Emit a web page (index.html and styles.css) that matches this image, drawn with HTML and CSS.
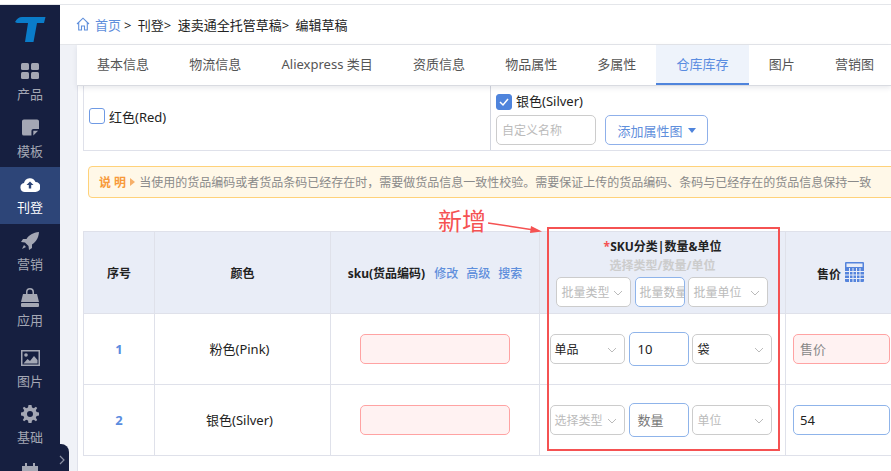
FILE: index.html
```html
<!DOCTYPE html>
<html lang="zh">
<head>
<meta charset="utf-8">
<title>编辑草稿</title>
<link rel="stylesheet" href="styles.css">
</head>
<body>
<div class="topline"></div>
<div class="app">
  <aside class="sidebar">
    <div class="logo">
      <svg width="31" height="26" viewBox="0 0 31 26"><path d="M0 5C2 1.500 4 0 7 0H30.500L29 6H22L18.500 25H10L13 6H2Z" fill="#0a7cc9"/></svg>
    </div>
    <div class="nav-item">
      <svg class="nav-icon" width="18" height="16" viewBox="0 0 18 16"><rect x="0" y="0" width="8" height="7" rx="1.500"/><rect x="10" y="0" width="8" height="7" rx="1.500"/><rect x="0" y="9" width="8" height="7" rx="1.500"/><rect x="10" y="9" width="8" height="7" rx="1.500"/></svg>
      <span>产品</span>
    </div>
    <div class="nav-item">
      <svg class="nav-icon" width="17" height="17" viewBox="0 0 18 17"><path d="M2 0H16A2 2 0 0 1 18 2V10H12A2 2 0 0 0 10 12V17H2A2 2 0 0 1 0 15V2A2 2 0 0 1 2 0Z"/><path d="M12 12H17L12 17Z"/></svg>
      <span>模板</span>
    </div>
    <div class="nav-item active">
      <svg class="nav-icon" width="20" height="15" viewBox="0 0 20 15"><path d="M5 15A4.500 4.500 0 0 1 4 6.100A6 6 0 0 1 15.500 5A5 5 0 0 1 15.500 15Z"/><path d="M10 4.500L13.500 8H11.200V11.500H8.800V8H6.500Z" fill="#2d4578"/></svg>
      <span>刊登</span>
    </div>
    <div class="nav-item">
      <svg class="nav-icon" width="18" height="18" viewBox="0 0 18 18"><path d="M18 0C12 .5 8 3 5.500 7H2L0 10L4 10.500L7.500 14L8 18L11 16V12.500C15 10 17.500 6 18 0Z"/><path d="M3 13L5 15L1 17Z"/></svg>
      <span>营销</span>
    </div>
    <div class="nav-item">
      <svg class="nav-icon" width="18" height="19" viewBox="0 0 18 19"><path d="M2 6H5V4A4 4 0 0 1 13 4V6H16L18 14H0ZM6.500 6H11.500V4A2.500 2.500 0 0 0 6.500 4Z" fill-rule="evenodd"/><rect x="0" y="15" width="18" height="4" rx="1"/></svg>
      <span>应用</span>
    </div>
    <div class="nav-item low">
      <svg class="nav-icon" width="19" height="16" viewBox="0 0 19 16"><path d="M0 0H19V16H0ZM1.500 1.500V14.500H17.500V1.500Z" fill-rule="evenodd"/><circle cx="5" cy="5" r="1.800"/><path d="M2.500 13.500L6.500 9L9 11L13 6L16.500 10V13.500Z"/></svg>
      <span>图片</span>
    </div>
    <div class="nav-item low">
      <svg class="nav-icon" width="18" height="18" viewBox="0 0 18 18"><path fill-rule="evenodd" d="M7.500 0H10.500L11 2.400L12.800 3.200L14.900 1.800L16.200 3.100L14.800 5.200L15.600 7L18 7.500V10.500L15.600 11L14.800 12.800L16.200 14.900L14.900 16.200L12.800 14.800L11 15.600L10.500 18H7.500L7 15.600L5.200 14.800L3.100 16.200L1.800 14.900L3.200 12.800L2.400 11L0 10.500V7.500L2.400 7L3.200 5.200L1.800 3.100L3.100 1.800L5.200 3.200L7 2.400ZM9 6A3 3 0 1 0 9 12A3 3 0 1 0 9 6Z"/></svg>
      <span>基础</span>
    </div>
    <div class="nav-item low">
      <svg class="nav-icon" width="18" height="16" viewBox="0 0 18 16"><path d="M1 3H4V0H6V3H12V0H14V3H17V16H1Z"/></svg>
    </div>
  </aside>
  <main class="main">
    <header class="crumbs">
      <svg class="home" width="14" height="14" viewBox="0 0 14 14"><path d="M1 7L7 1.200L13 7M2.700 5.800V13H5.500V9H8.500V13H11.300V5.800" fill="none" stroke="#5f8fdc" stroke-width="1.100"/></svg>
      <a class="crumb-home">首页</a>
      <span class="crumb-rest">&gt; 刊登&gt; 速卖通全托管草稿&gt; 编辑草稿</span>
    </header>
    <div class="stage">
      <div class="gutter"></div>
      <section class="content">
        <nav class="tabs">
          <a class="tab">基本信息</a>
          <a class="tab">物流信息</a>
          <a class="tab">Aliexpress 类目</a>
          <a class="tab">资质信息</a>
          <a class="tab">物品属性</a>
          <a class="tab">多属性</a>
          <a class="tab current">仓库库存</a>
          <a class="tab">图片</a>
          <a class="tab">营销图</a>
        </nav>
        <div class="pane">
          <div class="attrs">
            <div class="attr attr-left">
              <span class="check"></span><span class="attr-name">红色(Red)</span>
            </div>
            <div class="attr attr-right">
              <div class="attr-head">
                <span class="check on"><svg width="12" height="10" viewBox="0 0 12 10"><path d="M2 5L5 8L10 2" fill="none" stroke="#fff" stroke-width="1.500"/></svg></span>
                <span class="attr-name up">银色(Silver)</span>
              </div>
              <div class="attr-tools">
                <div class="field ph name-field">自定义名称</div>
                <div class="add-btn">添加属性图<i class="caret"></i></div>
              </div>
            </div>
          </div>
          <div class="notice"><b>说 明</b><i class="tri"></i><span>当使用的货品编码或者货品条码已经存在时，需要做货品信息一致性校验。需要保证上传的货品编码、条码与已经存在的货品信息保持一致</span></div>
          <table class="grid">
            <colgroup><col class="c1"><col class="c2"><col class="c3"><col class="c4"><col class="c5"></colgroup>
            <thead>
              <tr>
                <th>序号</th>
                <th>颜色</th>
                <th><span class="sku-title">sku(货品编码)</span><a class="lnk">修改</a><a class="lnk">高级</a><a class="lnk">搜索</a></th>
                <th class="sku-cell">
                  <div class="sku-h"><em>*</em>SKU分类|数量&amp;单位</div>
                  <div class="sku-sub">选择类型/数量/单位</div>
                  <div class="trio trio-head">
                    <div class="field sel ph w75 pad5">批量类型<svg class="chev" width="10" height="6" viewBox="0 0 10 6"><path d="M1 1L5 5L9 1"/></svg></div>
                    <div class="field ph focus w50">批量数量</div>
                    <div class="field sel ph w80 pad5">批量单位<svg class="chev" width="10" height="6" viewBox="0 0 10 6"><path d="M1 1L5 5L9 1"/></svg></div>
                  </div>
                </th>
                <th><span class="price">售价</span><svg class="calc" width="19" height="20" viewBox="0 0 19 20"><path fill-rule="evenodd" fill="#5584dc" d="M1 0H18A1 1 0 0 1 19 1V19A1 1 0 0 1 18 20H1A1 1 0 0 1 0 19V1A1 1 0 0 1 1 0ZM1.500 1.500V5H17.500V1.500Z"/><path stroke="#e9edf7" stroke-width="1" d="M0 9.500H19M0 13H19M0 16.500H19M4.500 6V20M8 6V20M11.500 6V20M15 6V20"/></svg></th>
              </tr>
            </thead>
            <tbody>
              <tr>
                <td class="idx">1</td>
                <td class="color">粉色(Pink)</td>
                <td><div class="field err sku-input"></div></td>
                <td>
                  <div class="trio">
                    <div class="field sel w75">单品<svg class="chev" width="10" height="6" viewBox="0 0 10 6"><path d="M1 1L5 5L9 1"/></svg></div>
                    <div class="field focus qty">10</div>
                    <div class="field sel w80 pad5">袋<svg class="chev" width="10" height="6" viewBox="0 0 10 6"><path d="M1 1L5 5L9 1"/></svg></div>
                  </div>
                </td>
                <td class="price-td"><div class="field err price-input">售价</div></td>
              </tr>
              <tr>
                <td class="idx">2</td>
                <td class="color">银色(Silver)</td>
                <td><div class="field err sku-input"></div></td>
                <td>
                  <div class="trio">
                    <div class="field sel ph w75">选择类型<svg class="chev" width="10" height="6" viewBox="0 0 10 6"><path d="M1 1L5 5L9 1"/></svg></div>
                    <div class="field focus qty muted">数量</div>
                    <div class="field sel ph w80 pad5">单位<svg class="chev" width="10" height="6" viewBox="0 0 10 6"><path d="M1 1L5 5L9 1"/></svg></div>
                  </div>
                </td>
                <td class="price-td"><div class="field focus price-input val">54</div></td>
              </tr>
            </tbody>
          </table>
        </div>
      </section>
    </div>
  </main>
</div>
<div class="collapse">
  <svg width="6" height="10" viewBox="0 0 6 10"><path d="M1 1L5 5L1 9" fill="none" stroke="#8b90a3" stroke-width="1.200"/></svg>
</div>
<div class="note-label">新增</div>
<svg class="note-arrow" width="56" height="14" viewBox="0 0 56 14"><path d="M0 2L46 9" stroke="#f55252" stroke-width="1.500"/><path d="M43 5L54 10.500L42 12Z" fill="#f55252"/></svg>
<div class="note-box"></div>
</body>
</html>
```

FILE: styles.css
```css
* { box-sizing: border-box; }
html, body { margin: 0; padding: 0; height: 100%; overflow: hidden; background: #fff; }
body {
  position: relative;
  font-family: "Noto Sans", "Noto Sans CJK SC", sans-serif;
  font-size: 13px;
  color: #222;
}
.topline { height: 5px; background: #fff; border-bottom: 1px solid #e4e6ea; }
.app { display: flex; height: 466px; overflow: hidden; }

/* sidebar */
.sidebar {
  width: 60px;
  flex: none;
  background: #161f40;
  display: flex;
  flex-direction: column;
  align-items: stretch;
  overflow: hidden;
}
.logo { height: 49px; flex: none; display: flex; align-items: flex-start; justify-content: center; padding: 12px 0 0 1px; }
.nav-item {
  height: 56.5px;
  flex: none;
  display: grid;
  grid-template-rows: 16px 18px;
  justify-items: center;
  align-items: center;
  align-content: start;
  padding-top: 9px;
  row-gap: 6px;
  color: #a4a7b4;
  font-size: 13px;
  line-height: 18px;
}
.nav-item.low { padding-top: 13px; }
.nav-icon { fill: #a4a7b4; display: block; }
.nav-item.active { background: #2d4578; color: #fff; }
.nav-item.active .nav-icon { fill: #fff; }
.collapse {
  position: absolute;
  left: 50px;
  bottom: 0;
  width: 19px;
  height: 27px;
  background: #161f40;
  border-radius: 0 8px 0 0;
  display: flex;
  align-items: flex-end;
  justify-content: flex-end;
  padding: 0 4px 6px 0;
}

/* header */
.main { flex: 1; min-width: 0; display: flex; flex-direction: column; }
.crumbs {
  height: 40px;
  flex: none;
  display: flex;
  align-items: center;
  padding: 0 0 1px 16px;
  background: #fff;
  border-bottom: 1px solid #e4e6ea;
  font-size: 13px;
  color: #222;
  white-space: nowrap;
}
.home { margin-right: 5px; flex: none; }
.crumb-home { color: #5f8fdc; }
.crumb-rest { margin-left: 3px; word-spacing: 3px; }
.stage { flex: 1; display: flex; min-height: 0; }
.gutter { width: 17px; flex: none; background: #f0f2f7; }
.content { flex: 1; min-width: 0; display: flex; flex-direction: column; position: relative; background: #fff; }

/* tabs */
.tabs {
  height: 41px;
  flex: none;
  display: flex;
  background: #fff;
  border-bottom: 1px solid #d9dbe1;
  box-shadow: 0 2px 5px rgba(40, 50, 80, .10);
  position: relative;
  z-index: 1;
  white-space: nowrap;
}
.tab { padding: 0 20.100px; line-height: 39px; color: #555; font-size: 13px; flex: none; }
.current { color: #5a8ce0; background: #eef3fb; border-bottom: 2px solid #4f84dc; }

/* pane */
.pane { flex: 1; min-height: 0; padding-left: 5px; border-left: 1px solid #dfe1ea; overflow: hidden; }
.attrs { display: flex; height: 65px; width: 900px; border-bottom: 1px solid #dfe1ea; }
.attr { display: flex; }
.attr-left {
  width: 408px;
  flex: none;
  border-left: 1px solid #dfe1ea;
  border-right: 1px solid #d2d5de;
  align-items: center;
  padding: 0 0 4px 5px;
  gap: 4px;
}
.attr-right { flex-direction: column; padding: 8px 0 0 5px; }
.attr-head { display: flex; align-items: center; gap: 4px; height: 16px; margin-bottom: 5px; }
.attr-name { font-size: 13px; color: #222; white-space: nowrap; }
.attr-name.up { margin-top: -3px; }
.check {
  width: 16px;
  height: 16px;
  flex: none;
  border: 1px solid #6f9ae4;
  border-radius: 3px;
  background: #fff;
  display: flex;
  align-items: center;
  justify-content: center;
}
.check.on { background: #4f84dc; border-color: #4f84dc; }
.attr-tools { display: flex; gap: 9px; }
.field {
  height: 30px;
  border: 1px solid #ccc;
  border-radius: 5px;
  background: #fff;
  display: flex;
  align-items: center;
  padding: 0 3px;
  font-size: 12px;
  color: #222;
  white-space: nowrap;
  overflow: hidden;
  flex: none;
  font-weight: 400;
  position: relative;
}
.ph { color: #bbb; }
.name-field { width: 100px; padding-left: 5px; font-size: 12px; }
.add-btn {
  width: 103px;
  height: 30px;
  border: 1px solid #8fb0ea;
  border-radius: 5px;
  color: #5f8fdc;
  display: flex;
  align-items: center;
  justify-content: center;
  gap: 5px;
  font-size: 13px;
}
.caret { width: 0; height: 0; border: 4px solid transparent; border-top: 5px solid #4f84dc; border-bottom: 0; }

/* notice */
.notice {
  margin: 15px 0 0 5px;
  width: 900px;
  height: 32px;
  background: #fff8e8;
  border: 1px solid #ffd27a;
  border-radius: 4px;
  display: flex;
  align-items: center;
  padding-left: 10px;
  font-size: 12px;
  color: #8a8a8a;
  white-space: nowrap;
}
.notice b { color: #f79a3a; font-weight: 700; }
.tri { width: 0; height: 0; margin: 0 4px 0 4px; border: 4px solid transparent; border-left: 5px solid #f7b06a; border-right: 0; }

/* table */
.grid {
  margin-top: 33px;
  table-layout: fixed;
  border-collapse: collapse;
  width: 812px;
  font-size: 13px;
  color: #222;
}
.c1 { width: 71px; }
.c2 { width: 176px; }
.c3 { width: 209px; }
.c4 { width: 246px; }
.c5 { width: 110px; }
.grid th, .grid td { border: 1px solid #dfe1ea; text-align: center; vertical-align: middle; padding: 0; overflow: hidden; }
.grid th { height: 82px; background: #e9edf7; font-size: 12px; font-weight: 700; color: #222; white-space: nowrap; }
.grid td { height: 71px; }
.grid td.color { padding: 0 6px 1px 0; }
.idx { color: #5a8ce0; font-weight: 700; font-size: 13px; }
.sku-title { margin-right: 1px; }
.lnk { color: #5f8fdc; margin-left: 8px; font-weight: 500; }
.grid th.sku-cell { padding-bottom: 1px; }
.sku-h { line-height: 18px; }
.sku-h em { color: #f55252; font-style: normal; }
.sku-sub { color: #ccc; line-height: 20px; margin-bottom: 1px; }
.trio { display: flex; justify-content: center; align-items: center; gap: 3px; padding-right: 4px; }
.trio-head { padding-right: 2px; }
.w75 { width: 75px; }
.w80 { width: 80px; }
.w50 { width: 50px; padding-left: 4px; margin-left: 1px; }
.sel { padding-left: 4px; padding-right: 14px; }
.pad5 { padding-left: 5px; }
.chev { position: absolute; right: 7px; top: 12px; fill: none; stroke: #bbb; stroke-width: 1; }
.focus { border-color: #8fb4ea; }
.qty { width: 60px; height: 34px; margin-left: 1px; padding: 0 0 1px 8px; font-size: 13px; }
.muted { color: #777; }
.err { background: #fff2f2; border-color: #ffa3a3; }
.sku-input { width: 150px; margin: 0 0 0 29px; }
.price { margin-right: 4px; }
.calc { vertical-align: -3px; }
.grid td.price-td { padding-left: 7px; }
.price-input { width: 97px; padding: 0 0 1px 6px; font-size: 13px; }
.price-input.err { color: #888; }
.val { color: #222; }

/* annotation drawn over the screenshot */
.note-label {
  position: absolute;
  left: 438px;
  top: 206px;
  font-size: 24px;
  line-height: 30px;
  color: #f55252;
}
.note-arrow { position: absolute; left: 488px; top: 221px; }
.note-box {
  position: absolute;
  left: 547px;
  top: 227px;
  width: 233px;
  height: 224px;
  border: 2px solid #f55252;
}
```
